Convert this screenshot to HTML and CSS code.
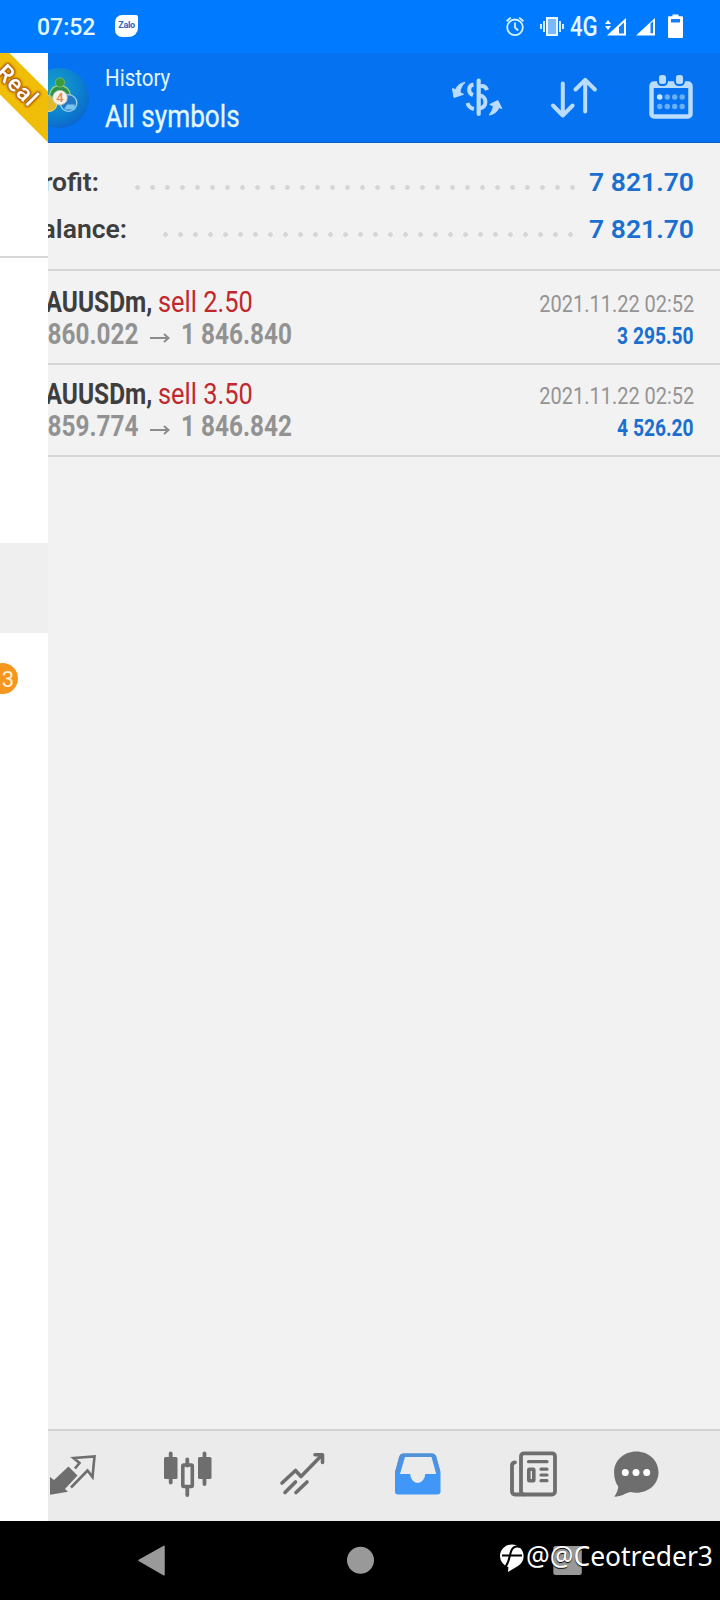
FILE: index.html
```html
<!DOCTYPE html>
<html lang="en">
<head>
<meta charset="utf-8">
<title>History</title>
<link rel="stylesheet" href="styles.css">
</head>
<body>
<div class="screen">
  <div class="status">
    <span class="clock">07:52</span>
    <span class="zalo"><span>Zalo</span></span>
    <svg class="st-icons" width="70" height="30" viewBox="500 12 70 30">
      <g fill="none" stroke="#d5f2ff" stroke-width="1.8"><circle cx="515" cy="27.3" r="7.8"/><path d="M515 22.5v5l3.2 3M506.600 21.200l4.200-3.600M523.400 21.200l-4.200-3.600"/></g>
      <rect x="547" y="18" width="10" height="17" fill="#7db8f8" stroke="#e8f8ff" stroke-width="2"/>
      <path d="M544 21v11M541 24v5M560 21v11M563 24v5" stroke="#e8f8ff" stroke-width="1.8"/>
    </svg>
    <span class="net">4G</span>
    <svg class="st-icons2" width="90" height="30" viewBox="600 12 90 30">
      <path d="M605 24l3-4 3 4zM605 26l3 4 3-4z" fill="#fff"/>
      <path d="M607 35.500L626 18v17.500z" fill="#fff"/><path d="M619 27l5-4.600v11h-5z" fill="#1480f8"/>
      <path d="M636 35.500L655 18v17.500z" fill="#fff"/><path d="M650.500 23.600l2.500-2.300v12h-2.500z" fill="#1480f8"/>
      <path d="M672.500 14.500h6v1.800h3.500a1 1 0 0 1 1 1V37a1 1 0 0 1-1 1h-13a1 1 0 0 1-1-1V17.300a1 1 0 0 1 1-1h3.500z" fill="#fff"/>
      <path d="M671 19h9v3.500h-9z" fill="#1480f8"/>
    </svg>
  </div>

  <div class="body">
    <aside class="drawer">
      <div class="account"><span class="ribbon">Real</span></div>
      <div class="gap"></div>
      <div class="selected"></div>
      <div class="item"><span class="badge">3</span></div>
    </aside>

    <main class="pane">
      <header class="bar">
        <svg class="logo" width="42" height="90" viewBox="48 53 42 90">
          <defs><radialGradient id="lg" cx=".4" cy=".35" r=".7"><stop offset="0" stop-color="#16a3c9"/><stop offset=".6" stop-color="#0d83cf"/><stop offset="1" stop-color="#0a66cc"/></radialGradient></defs>
          <circle cx="59" cy="98" r="30" fill="url(#lg)"/>
          <circle cx="49" cy="103.500" r="8" fill="#e0b92c" stroke="#f0dc80" stroke-width="1"/>
          <path d="M49.500 95c1-6 5-9.500 10.500-9.500s10 4 10.500 10l-4 4h-13z" fill="#2f8f4c" stroke="#9bd07a" stroke-width="1.300"/>
          <circle cx="60" cy="82.500" r="4.600" fill="#3d9b3c" stroke="#7cc46c" stroke-width=".8"/>
          <circle cx="68.500" cy="103" r="8.300" fill="#2478c8" stroke="#9fd4f0" stroke-width="1.300"/>
          <path d="M67 104.500h7.500l1 5H64z" fill="#7cc4f0"/>
          <circle cx="60" cy="97.700" r="7.300" fill="#f7f0ea" stroke="#b9c9b0" stroke-width=".8"/>
          <text x="60" y="102.300" text-anchor="middle" class="four">4</text>
        </svg>
        <div class="titles">
          <span class="c sub">History</span>
          <span class="c head">All symbols</span>
        </div>
        <svg class="actions" width="260" height="60" viewBox="445 68 260 60">
          <g fill="none" stroke="#b9dcff" stroke-width="4">
            <path d="M478.700 80.500v33.500" stroke-width="4.200" stroke-linecap="round"/>
            <path d="M473.500 84.500c-5.500 1-6 8.500-.5 10.500M480 86.500c3-1.500 5.500 0 7.200 3.500M480 95.500c7 1 7.500 11.500 0 13M474 109c-3.500-.7-5.700-3-6.500-6"/>
          </g>
          <path d="M465 82.500c-5 .5-8.500 4-9.300 7.300l-3.200-1.300 1.500 9 9.500-3.200-3.500-1.800c.3-4 2-7.500 5-10z" fill="#b9dcff" stroke="#b9dcff"/>
          <path d="M489 115c5-.5 9-4 9.800-7.500l3 1-4-8-8 4 3.500 1.300c-.3 3.500-1.800 6.500-4.300 9.200z" fill="#b9dcff" stroke="#b9dcff"/>
          <g fill="none" stroke="#b9dcff" stroke-width="4" stroke-linecap="round" stroke-linejoin="round"><path d="M562.800 83.500v32M553 105.500l9.800 10 9.800-10M585.200 111.500V80M575.500 89.500l9.700-9.700 9.700 9.700"/></g>
          <rect x="651.500" y="83.500" width="39" height="33" rx="2.500" fill="none" stroke="#b9dcff" stroke-width="4.500"/>
          <path d="M651 82h40v6h-40z" fill="#b9dcff"/>
          <rect x="658" y="74" width="9" height="11" rx="3.500" fill="#b9dcff" stroke="#0572f0" stroke-width="2"/>
          <rect x="675" y="74" width="9" height="11" rx="3.500" fill="#b9dcff" stroke="#0572f0" stroke-width="2"/>
          <circle cx="659.700" cy="97" r="2.800" fill="#c9e9ff"/>
          <g fill="#69aff8"><circle cx="667.300" cy="97" r="2.700"/><circle cx="674.700" cy="97" r="2.700"/><circle cx="682.200" cy="97" r="2.700"/><circle cx="659.700" cy="106.500" r="2.700"/><circle cx="667.300" cy="106.500" r="2.700"/><circle cx="674.700" cy="106.500" r="2.700"/><circle cx="682.200" cy="106.500" r="2.700"/></g>
        </svg>
      </header>

      <section class="summary">
        <div class="sum"><b class="label">Profit:</b><i class="dots d1"></i><b class="total">7 821.70</b></div>
        <div class="sum"><b class="label">Balance:</b><i class="dots d2"></i><b class="total">7 821.70</b></div>
      </section>

      <section class="deal first">
        <div class="line"><span class="left sym"><b class="c r">XAUUSDm,</b></span><span class="c side">sell 2.50</span><span class="c date">2021.11.22 02:52</span></div>
        <div class="line"><span class="left from"><b class="c r price">1 860.022</b></span><svg class="arrow" width="43" height="16" viewBox="0 0 43 16"><path d="M12 8h18M26 4l4.500 4-4.500 4"/></svg><b class="c price">1 846.840</b><b class="c gain">3 295.50</b></div>
      </section>
      <section class="deal">
        <div class="line"><span class="left sym"><b class="c r">XAUUSDm,</b></span><span class="c side">sell 3.50</span><span class="c date">2021.11.22 02:52</span></div>
        <div class="line"><span class="left from"><b class="c r price">1 859.774</b></span><svg class="arrow" width="43" height="16" viewBox="0 0 43 16"><path d="M12 8h18M26 4l4.500 4-4.500 4"/></svg><b class="c price">1 846.842</b><b class="c gain">4 526.20</b></div>
      </section>

      <div class="empty"></div>

      <nav class="tabs">
        <svg width="672" height="90" viewBox="48 1431 672 90">
          <g fill="#6e6e6e">
            <path d="M50 1477l4 3 14.500-13.500 9 9L65 1489l3 2.800-18 3z"/>
            <path d="M71 1487.500l16.500-17 5 6.500 2-20.500-21 1.500 6 5-4.500 5.500" fill="none" stroke="#6e6e6e" stroke-width="2.600"/>
            <rect x="164" y="1457" width="13.500" height="22" rx="1.500"/><rect x="198" y="1457" width="13.500" height="22" rx="1.500"/>
            <path d="M170.700 1453.500v29M204.500 1453.500v30.500M187.300 1459.500v6M187.300 1488v7" stroke="#6e6e6e" stroke-width="3.800" stroke-linecap="round"/>
            <rect x="182.800" y="1465" width="9.500" height="21.500" rx="1" fill="none" stroke="#6e6e6e" stroke-width="3.600"/>
          </g>
          <g fill="none" stroke="#6e6e6e" stroke-linecap="round" stroke-linejoin="round">
            <path d="M282 1483l13.500-12.500 5.500 6 21-21.500M315 1454.800h7.500v7.700M285 1492.500l10.500-10.500M296 1492.500l11-10.500" stroke-width="3.600"/>
          </g>
          <path d="M403 1453.500h29.500q2.500 0 3.500 2.500l4.500 16v19.500q0 3-3 3h-39.500q-3 0-3-3V1472l4.500-16q1-2.500 3.500-2.500z" fill="#4197f7"/>
          <path d="M405 1457h26.500l4.700 17h-11a7.500 9 0 0 1-15 0H400z" fill="#ebebeb"/>
          <path d="M403 1455.200h29.500q1.500 0 2 1.500l4 15M403 1455.200q-1.500 0-2 1.500l-4 15" fill="none" stroke="#5291d5" stroke-width="3.500"/>
          <g fill="none" stroke="#6e6e6e" stroke-width="3.800" stroke-linecap="round">
            <rect x="521" y="1453.300" width="34" height="41.200" rx="3"/>
            <path d="M515 1462.300c-2 .3-3 1-3 3v26q0 3.200 3.200 3.200h8"/>
            <path d="M528.500 1461.700h18.500M541 1469.200h6M541 1475h6M541 1480.700h6" stroke-width="3.200"/>
            <rect x="528.800" y="1469.200" width="5" height="11.500" rx=".5" stroke-width="3.600"/>
          </g>
          <path d="M636.300 1451.500c12.500 0 22.200 9 22.200 20.700s-9.700 20.500-22.200 20.500c-2 0-4-.3-6-.7-5 1-8.500 4.500-16 4.700 2.500-3.500 3.700-7 4-10.200-2.700-3.500-4.200-8.500-4.200-14.300 0-11.700 9.700-20.700 22.200-20.700z" fill="#6e6e6e"/>
          <g fill="#fff"><circle cx="625.300" cy="1472.600" r="3.500"/><circle cx="636" cy="1472.600" r="3.500"/><circle cx="646.700" cy="1472.600" r="3.500"/></g>
        </svg>
      </nav>
    </main>
  </div>

  <footer class="sysnav">
    <svg width="720" height="79" viewBox="0 1521 720 79">
      <path d="M139 1560.300L164 1546.300v28.500z" fill="#999" stroke="#999" stroke-width="1.500" stroke-linejoin="round"/>
      <circle cx="360.500" cy="1560.300" r="13.500" fill="#999"/>
      <rect x="553.300" y="1546" width="28.500" height="29" rx="2.500" fill="#999"/>
      <path d="M512 1544.500a11.700 11.700 0 0 1 11.600 11.700c0 7-5.500 9.500-9 11.800l-6.600 4 .4-5a11.500 11.500 0 0 1-8.400-10.800 11.800 11.800 0 0 1 12-11.700z" fill="#fff"/>
      <path d="M520.500 1547c-6-2-9 1-10.500 8-1 6-3 10-5 13M502 1555.500h20" fill="none" stroke="#000" stroke-width="2"/>
    </svg>
    <span class="mark">@@Ceotreder3</span>
  </footer>
</div>
</body>
</html>
```
FILE: styles.css
```css
* { box-sizing: border-box; }
body { margin: 0; font-family: Roboto, "Liberation Sans", sans-serif; }
.screen { width: 720px; height: 1600px; display: flex; flex-direction: column; overflow: hidden; background: #f2f2f2; }
svg { display: block; flex: none; }

/* Roboto narrowed to condensed proportions */
.c { display: inline-block; flex: none; white-space: nowrap; transform: scaleX(.855); transform-origin: left; }
.c.r { transform-origin: right; }

.status { height: 53px; flex: none; background: #007bff; display: flex; color: #e6f8ff; }
.clock { width: 78px; margin-left: 37px; font-size: 23px; font-weight: 500; line-height: 55px; }
.zalo { width: 23px; height: 22px; margin-top: 15px; background: #fff; border-radius: 7px 2px 9px 7px; display: flex; justify-content: center; }
.zalo span { font-size: 9px; font-weight: 700; line-height: 21px; color: #2c66c4; letter-spacing: -.3px; }
.st-icons { margin: 12px 0 0 362px; }
.net { width: 30px; flex: none; font-size: 27px; line-height: 55px; font-weight: 500; transform: scaleX(.82); transform-origin: left; }
.st-icons2 { margin-top: 12px; }

.body { height: 1468px; flex: none; display: flex; }
.drawer { width: 48px; flex: none; background: #fff; overflow: hidden; }
.account { height: 205px; border-bottom: 2px solid #d8d8d8; position: relative; }
.ribbon { position: absolute; left: -48px; top: 15px; width: 130px; height: 36px; background: #f0bd08; transform: rotate(45deg); text-align: center; font-size: 23px; line-height: 35px; font-weight: 500; letter-spacing: .8px; color: #fff; text-shadow: 0 0 3px #a8550a, 0 0 3px #a8550a, 0 0 3px #a8550a, 0 0 2px #a8550a, 0 0 2px #a8550a; }
.gap { height: 285px; }
.selected { height: 90px; background: #efefef; }
.item { padding-top: 30px; }
.badge { display: block; width: 31px; height: 31px; margin-left: -13px; border-radius: 50%; background: #f6961e; color: #fff0d8; font-size: 22px; line-height: 33px; text-align: right; padding-right: 4px; }

.pane { width: 672px; flex: none; display: flex; flex-direction: column; overflow: hidden; background: #f2f2f2; }
.bar { height: 90px; flex: none; background: #0573f1; border-bottom: 1px solid #0a62c8; display: flex; color: #e4f6ff; }
.titles { width: 355px; flex: none; padding: 9px 0 0 15px; display: flex; flex-direction: column; align-items: flex-start; }
.sub { font-size: 24px; line-height: 33px; }
.head { font-size: 32px; line-height: 42px; }
.c.head { transform: scaleX(.818); -webkit-text-stroke: .3px; }
.actions { margin-top: 15px; }
.four { font-size: 13px; font-weight: 500; fill: #e08a5c; }

.summary { height: 128px; flex: none; padding: 15px 26px 0 0; border-bottom: 2px solid #d6d6d6; }
.sum { height: 47px; display: flex; justify-content: flex-end; font-size: 26.500px; line-height: 47px; white-space: nowrap; }
.sum b { font-weight: 600; }
.label { flex: none; color: #3e3e3e; margin-right: 31px; }
.dots { flex: none; height: 5px; margin-top: 27px; background: radial-gradient(circle at 7.500px 2.500px, #d6d6d6 2px, transparent 2.700px) 0 0 / 15px 5px repeat-x; }
.d1 { width: 450px; }
.d2 { width: 420px; margin-right: 2px; }
.total { width: 114px; flex: none; text-align: right; color: #1a6fd0; }

.deal { height: 92px; flex: none; padding: 13px 26px 0 0; border-bottom: 2px solid #d6d6d6; }
.deal.first { height: 94px; padding-top: 15px; }
.line { height: 32px; display: flex; align-items: baseline; line-height: 32px; font-size: 29.500px; }
.line b { font-weight: 700; }
.left { flex: none; display: flex; justify-content: flex-end; color: #3e3e3e; }
.sym { width: 104px; margin-right: 6px; }
.line .sym .c { transform: scaleX(.83); }
.from { width: 90px; }
.c.side { color: #c0282d; transform: scaleX(.86); }
.line .price { color: #929292; transform: scaleX(.825); }
.arrow { width: 43px; align-self: center; margin-top: 7px; }
.arrow path { fill: none; stroke: #8c8c8c; stroke-width: 2; }
.line .date, .line .gain { margin-left: auto; font-size: 24px; transform-origin: right; }
.c.date { color: #949494; transform: scaleX(.832); }
.c.gain { color: #1a6fd0; transform: scaleX(.8); }

.empty { flex: 1; }
.tabs { height: 92px; flex: none; border-top: 2px solid #d2d2d2; background: #ebebeb; }

.sysnav { height: 79px; flex: none; background: #000; position: relative; }
.mark { position: absolute; left: 526px; top: 14px; font-family: "Noto Sans", sans-serif; font-size: 28px; line-height: 40px; white-space: nowrap; color: #fff; transform-origin: left; transform: scaleX(.943); text-shadow: 0 1px 1px #000; }
```
